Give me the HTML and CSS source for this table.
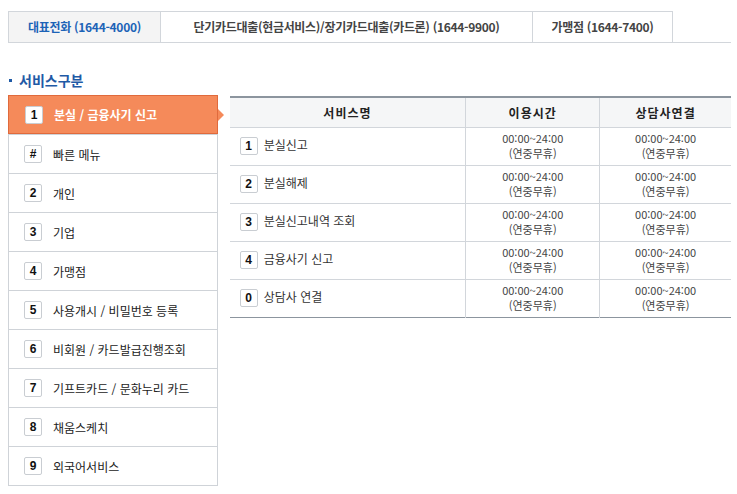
FILE: index.html
```html
<!DOCTYPE html>
<html lang="ko">
<head>
<meta charset="utf-8">
<link rel="stylesheet" href="styles.css">
</head>
<body>
<div class="page">
  <ul class="tabs">
    <li class="tab on">대표전화 (1644-4000)</li>
    <li class="tab">단기카드대출(현금서비스)/장기카드대출(카드론) (1644-9900)</li>
    <li class="tab">가맹점 (1644-7400)</li>
  </ul>

  <h2 class="title"><span class="dot"></span>서비스구분</h2>

  <div class="content">
    <ul class="menu">
      <li class="item on"><span class="num">1</span>분실 / 금융사기 신고</li>
      <li class="item"><span class="num">#</span>빠른 메뉴</li>
      <li class="item"><span class="num">2</span>개인</li>
      <li class="item"><span class="num">3</span>기업</li>
      <li class="item"><span class="num">4</span>가맹점</li>
      <li class="item"><span class="num">5</span>사용개시 / 비밀번호 등록</li>
      <li class="item"><span class="num">6</span>비회원 / 카드발급진행조회</li>
      <li class="item"><span class="num">7</span>기프트카드 / 문화누리 카드</li>
      <li class="item"><span class="num">8</span>채움스케치</li>
      <li class="item"><span class="num">9</span>외국어서비스</li>
    </ul>

    <table class="svc">
      <thead>
        <tr><th class="c1">서비스명</th><th class="c2">이용시간</th><th class="c3">상담사연결</th></tr>
      </thead>
      <tbody>
        <tr><td class="name"><span class="num">1</span>분실신고</td><td>00:00~24:00<br>(연중무휴)</td><td>00:00~24:00<br>(연중무휴)</td></tr>
        <tr><td class="name"><span class="num">2</span>분실해제</td><td>00:00~24:00<br>(연중무휴)</td><td>00:00~24:00<br>(연중무휴)</td></tr>
        <tr><td class="name"><span class="num">3</span>분실신고내역 조회</td><td>00:00~24:00<br>(연중무휴)</td><td>00:00~24:00<br>(연중무휴)</td></tr>
        <tr><td class="name"><span class="num">4</span>금융사기 신고</td><td>00:00~24:00<br>(연중무휴)</td><td>00:00~24:00<br>(연중무휴)</td></tr>
        <tr><td class="name"><span class="num">0</span>상담사 연결</td><td>00:00~24:00<br>(연중무휴)</td><td>00:00~24:00<br>(연중무휴)</td></tr>
      </tbody>
    </table>
  </div>
</div>
</body>
</html>
```

FILE: styles.css
```css
* { box-sizing: border-box; }
html, body { margin: 0; padding: 0; background: #fff; }
body {
  font-family: "Noto Sans CJK KR", "Noto Sans", sans-serif;
  font-size: 12px;
  color: #333;
}
.page { padding: 11px 6px 0 8px; width: 737px; }

.tabs {
  list-style: none; margin: 0; padding: 0;
  display: flex;
  border-bottom: 1px solid #d2d6db;
  width: 723px;
}
.tab {
  height: 31px;
  line-height: 29px;
  border: 1px solid #d2d6db;
  border-bottom: none;
  border-left: none;
  font-weight: bold;
  color: #444;
  font-size: 12px;
  letter-spacing: -0.3px;
  text-align: center;
}
.tab:first-child { border-left: 1px solid #d2d6db; width: 153px; }
.tab:nth-child(2) { width: 372px; }
.tab:nth-child(3) { width: 140px; }
.tab.on { background: #f4f4f4; color: #1c63b7; }

.title {
  margin: 28px 0 0 0;
  font-size: 14px;
  font-weight: bold;
  color: #1f5aa6;
  height: 18px;
  line-height: 18px;
  display: flex;
  align-items: center;
}
.dot { width: 3px; height: 3px; background: #1f5aa6; margin: 0 7px 0 1px; }

.content { display: flex; align-items: flex-start; margin-top: 6px; }

.menu {
  list-style: none; margin: 0; padding: 0;
  width: 210px;
  border: 1px solid #cfd3d8;
  border-top: none;
}
.item {
  position: relative;
  height: 39px;
  border-top: 1px solid #cfd3d8;
  display: flex; align-items: center;
  padding-left: 15px;
  color: #222;
  font-size: 12px;
}
.item.on {
  background: #f58a5a;
  color: #fff;
  font-weight: bold;
  margin: 0 -1px;
  padding-left: 16px;
  border: 1px solid #e06a3c;
  height: 39px;
}
.item.on::after {
  content: "";
  position: absolute;
  right: -7px; top: 13px;
  border-left: 6px solid #f58a5a;
  border-top: 6px solid transparent;
  border-bottom: 6px solid transparent;
}
.num {
  display: inline-block;
  width: 18px; height: 18px;
  border: 1px solid #c9cdd2;
  border-radius: 2px;
  background: #fff;
  color: #111;
  font-weight: bold;
  font-size: 12px;
  line-height: 16px;
  text-align: center;
  margin-right: 11px;
  font-family: "Liberation Sans", Arial, sans-serif;
}

.svc {
  margin-left: 12px;
  width: 502px;
  border-collapse: collapse;
  border-top: 2px solid #8c959e;
  border-bottom: 1px solid #8c959e;
  margin-top: 1px;
}
.svc th {
  height: 30px;
  padding: 0;
  background: #f5f6f7;
  font-weight: bold;
  color: #222;
  font-size: 12px;
  letter-spacing: 1px;
  border-left: 1px solid #d2d6db;
  border-bottom: 1px solid #d2d6db;
}
.svc th:first-child, .svc td:first-child { border-left: none; }
.c1 { width: 236px; }
.c2 { width: 134px; }
.svc td {
  height: 38px;
  padding: 0;
  border-left: 1px solid #d2d6db;
  border-top: 1px solid #d2d6db;
  text-align: center;
  font-size: 11px;
  line-height: 15px;
  color: #444;
}
.svc td.name {
  text-align: left;
  padding-left: 10px;
  font-size: 12px;
  color: #333;
}
.svc td.name .num { margin-right: 6px; }
```
